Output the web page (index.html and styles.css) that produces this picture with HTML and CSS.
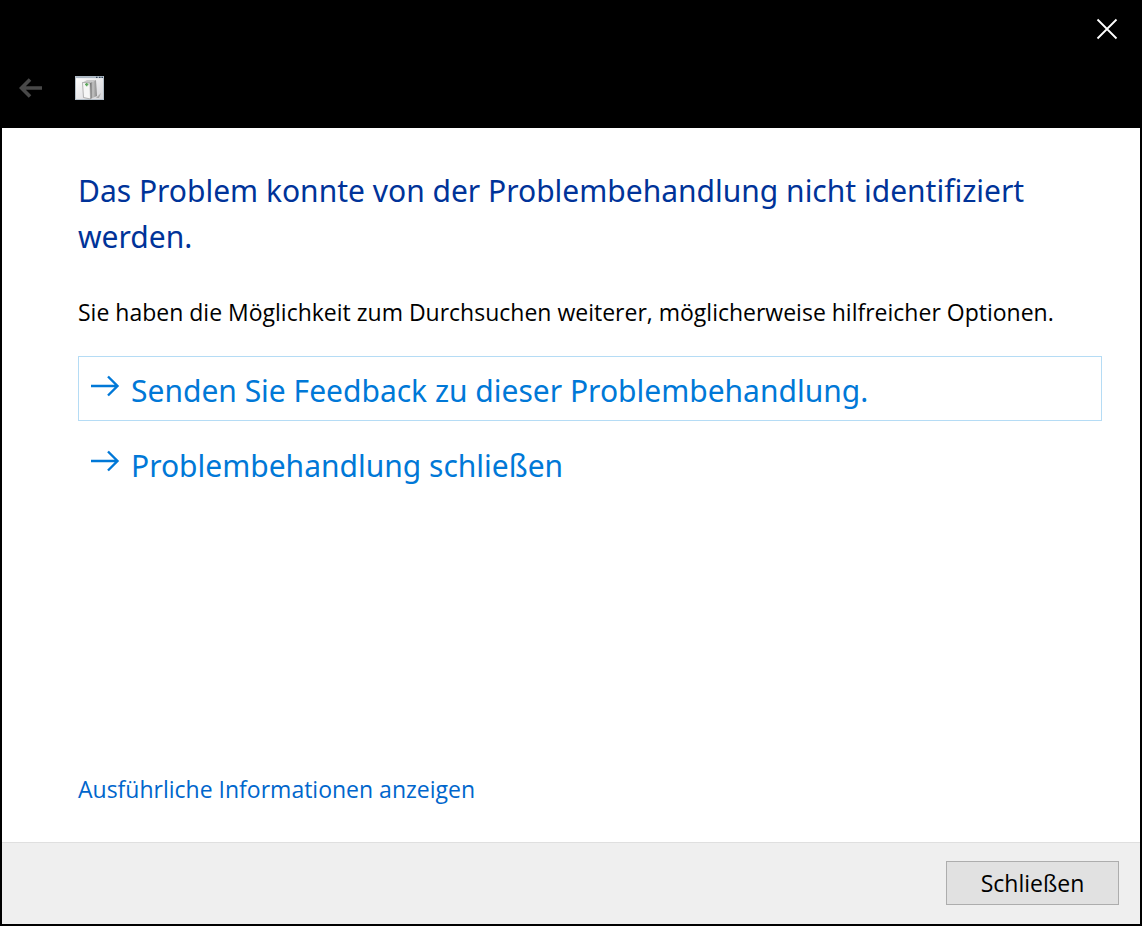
FILE: index.html
```html
<!DOCTYPE html>
<html lang="de">
  <head>
    <meta charset="UTF-8" />
    <meta name="viewport" content="width=device-width, initial-scale=1" />
    <title>Problembehandlung</title>
    <link rel="stylesheet" href="styles.css">
  </head>
  <body>
    <header class="titlebar">
      <div class="caption">
        <button class="btn-close" aria-label="Fenster schließen">
          <svg width="22" height="22" viewBox="0 0 22 22">
            <path d="M1.5 1.5 L20.5 20.5 M20.5 1.5 L1.5 20.5" fill="none" stroke="#fff" stroke-width="1.8" />
          </svg>
        </button>
      </div>
      <div class="nav">
        <button class="btn-back" aria-label="Zurück" disabled>
          <svg width="24" height="20" viewBox="0 0 24 20">
            <path d="M23 10 H3 M11 1.5 L2.5 10 L11 18.5" fill="none" stroke="#484848" stroke-width="3.6" />
          </svg>
        </button>
        <svg class="app-icon" width="30" height="25" viewBox="0 0 30 25">
          <defs>
            <linearGradient id="pane" x1="0" y1="0" x2="1" y2="1">
              <stop offset="0" stop-color="#fff" />
              <stop offset="1" stop-color="#d4d4d8" />
            </linearGradient>
            <linearGradient id="side" x1="0" y1="0" x2="1" y2="0">
              <stop offset="0" stop-color="#555" />
              <stop offset="0.4" stop-color="#c4c4c4" />
              <stop offset="1" stop-color="#888" />
            </linearGradient>
          </defs>
          <rect x="0.5" y="0.5" width="28" height="23" fill="url(#pane)" stroke="#b4bfc9" />
          <path d="M1 1.3 H28" stroke="#aab6c2" stroke-width="1.6" />
          <path d="M21 1.3 h1.5 M24 1.3 h1.5 M26.5 1.3 h1.5" stroke="#34465a" stroke-width="1.2" />
          <path d="M21 22 L26 17 L24 22 Z" fill="#aaa" />
          <path d="M7.5 6.5 L12 4 L21 4 L15 7 Z" fill="#c8c8c8" />
          <path d="M15 7 L21 4 L22 20 L15.5 23 Z" fill="url(#side)" />
          <path d="M7.5 6.5 L15 7 L15.5 23 L8.5 21.5 Z" fill="#f6f6f6" stroke="#888" stroke-width="0.6" />
          <path d="M10 8.5 H13.4 M11.7 7 V10.2" stroke="#60a960" stroke-width="1.4" />
        </svg>
      </div>
    </header>

    <main class="content">
      <h1>Das Problem konnte von der Problembehandlung nicht identifiziert werden.</h1>
      <p>Sie haben die Möglichkeit zum Durchsuchen weiterer, möglicherweise hilfreicher Optionen.</p>
      <div class="commands">
        <button class="command selected">
          <svg width="30" height="22" viewBox="0 0 30 22">
            <path d="M1 11 H28 M18 1.5 L27.5 11 L18 20.5" fill="none" stroke="#0078d7" stroke-width="2.4" />
          </svg>
          <span>Senden Sie Feedback zu dieser Problembehandlung.</span>
        </button>
        <button class="command">
          <svg width="30" height="22" viewBox="0 0 30 22">
            <path d="M1 11 H28 M18 1.5 L27.5 11 L18 20.5" fill="none" stroke="#0078d7" stroke-width="2.4" />
          </svg>
          <span>Problembehandlung schließen</span>
        </button>
      </div>
      <a class="details" href="#">Ausführliche Informationen anzeigen</a>
    </main>

    <footer class="footer">
      <button class="btn">Schließen</button>
    </footer>
  </body>
</html>
```
FILE: styles.css
```css
* {
  box-sizing: border-box;
}
body {
  margin: 0;
  min-height: 100vh;
  display: flex;
  flex-direction: column;
  border: 2px solid #000;
  background: #fff;
  color: #000;
  font-family: "Segoe UI", "Open Sans", sans-serif;
  font-size: 23px;
  line-height: 32px;
}
button {
  font: inherit;
  margin: 0;
  padding: 0;
  border: none;
  background: none;
  color: inherit;
}
svg {
  display: block;
  flex: none;
}

/* title bar */
.titlebar {
  background: #000;
}
.caption {
  display: flex;
  justify-content: flex-end;
  height: 54px;
}
.btn-close {
  padding: 0 22px;
}
.nav {
  display: flex;
  align-items: center;
  gap: 32px;
  height: 72px;
  padding: 0 17px 8px;
}

/* content */
.content {
  flex: 1;
  display: flex;
  flex-direction: column;
  align-items: flex-start;
  padding: 40px 38px 37px 76px;
}
h1,
.command {
  font-family: "Segoe UI", "Noto Sans", sans-serif;
  font-size: 30px;
  font-weight: 400;
}
h1 {
  margin: 0 0 36px;
  line-height: 46px;
  color: #003399;
}
p {
  margin: 0 0 28px;
}
.commands {
  align-self: stretch;
  display: flex;
  flex-direction: column;
  gap: 10px;
}
.command {
  display: flex;
  align-items: flex-start;
  gap: 11px;
  padding: 12px 11px 7px;
  border: 1px solid transparent;
  line-height: 44px;
  text-align: left;
  color: #0078d7;
}
.command svg {
  margin-top: 6px;
}
.command.selected {
  border-color: #b5dcf5;
}
.details {
  margin-top: auto;
  color: #0066cc;
  text-decoration: none;
}

/* footer */
.footer {
  display: flex;
  justify-content: flex-end;
  padding: 18px 21px 19px;
  background: #efefef;
  border-top: 1px solid #dfdfdf;
}
.btn {
  min-width: 173px;
  height: 44px;
  background: #e1e1e1;
  border: 1px solid #adadad;
}
```
